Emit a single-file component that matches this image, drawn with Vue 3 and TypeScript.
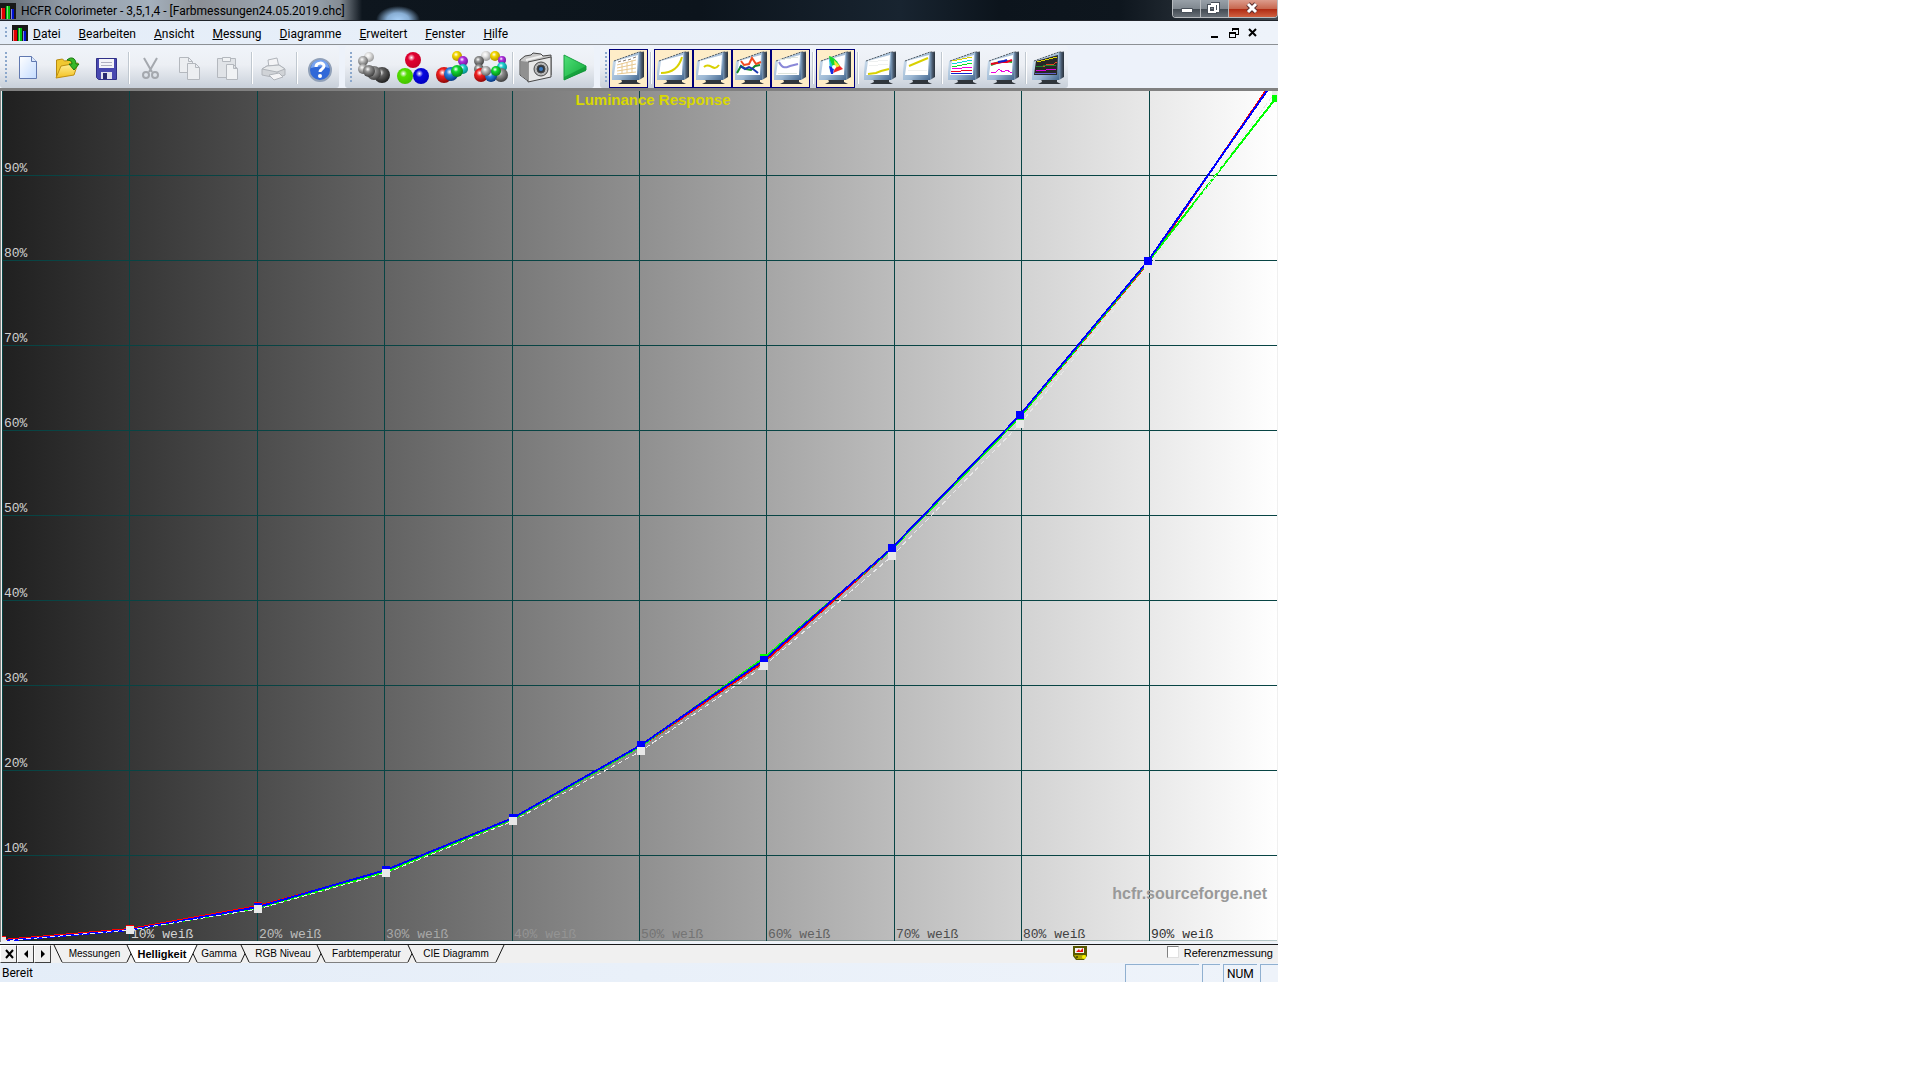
<script setup lang="ts">
import { ref } from 'vue'

type Ball = [number, number, number, string]
interface Trace { d: string; color: string; thin?: boolean }
interface Tool {
  id: string
  label: string
  sep?: boolean
  checked?: boolean
  balls?: Ball[]
  screen?: Trace[]
  dark?: boolean
}

const menus = ['Datei', 'Bearbeiten', 'Ansicht', 'Messung', 'Diagramme', 'Erweitert', 'Fenster', 'Hilfe']

const fileTools: Tool[] = [
  { id: 'new', label: 'Neu' },
  { id: 'open', label: 'Öffnen' },
  { id: 'save', label: 'Speichern' },
  { id: 'cut', label: 'Ausschneiden', sep: true },
  { id: 'copy', label: 'Kopieren' },
  { id: 'paste', label: 'Einfügen' },
  { id: 'print', label: 'Drucken', sep: true },
  { id: 'help', label: 'Hilfe', sep: true },
]

const measureTools: Tool[] = [
  { id: 'b1', label: 'Graustufen', balls: [[15, 8, 5, 'white'], [9, 12, 5, 'silver'], [9, 20, 5, 'silver'], [28, 26, 8, 'dark'], [20, 24, 7, 'grey'], [15, 22, 6, 'grey']] },
  { id: 'b2', label: 'Primärfarben', balls: [[20, 11, 8, 'crimson'], [12, 27, 8, 'lime'], [28, 27, 8, 'blue']] },
  { id: 'b3', label: 'Primär- und Sekundärfarben', balls: [[25, 7, 5, 'yellow'], [31, 12, 5, 'purple'], [31, 20, 5, 'cyan'], [12, 26, 8, 'red'], [19, 25, 7, 'sky'], [25, 22, 6, 'green']] },
  { id: 'b4', label: 'Alle Farben', balls: [[15, 7, 5, 'white'], [24, 7, 5, 'yellow'], [8, 12, 5, 'grey'], [31, 11, 4, 'purple'], [8, 20, 5, 'grey'], [31, 18, 5, 'cyan'], [10, 26, 7, 'red'], [30, 26, 7, 'grey'], [20, 27, 6, 'sky'], [15, 22, 5, 'silver'], [25, 22, 5, 'green']] },
  { id: 'camera', label: 'Sensor', sep: true },
  { id: 'play', label: 'Start' },
]

const viewTools: Tool[] = [
  { id: 'm1', label: 'Messungen', checked: true, screen: [
    { d: 'M9 13l3-1M14 12l3-1M19 11l3-1M24 9l3-1', color: '#8a7f78' },
    { d: 'M8 16l19-5M8 19l19-4M8 22l19-3M8 25l19-2M13 14v10M18 13v11M23 11v12', color: '#e8c890' },
  ] },
  { id: 'm2', label: 'Helligkeit', sep: true, checked: true, screen: [{ d: 'M7 24C17 24 25 19 28 8', color: '#d8d000' }] },
  { id: 'm3', label: 'Gamma', checked: true, screen: [{ d: 'M11 18c3-3 6-1 8 0s4 2 7-2', color: '#d8d000' }] },
  { id: 'm4', label: 'RGB Niveau', checked: true, screen: [
    { d: 'M5 24l4-7 5 3 5 1 4-4 5-1', color: '#138a2c' },
    { d: 'M9 12l3 4 5-1 3-6 4 6 5-2', color: '#f04a20' },
    { d: 'M8 17l5 3 4-2 4 2 5 4', color: '#1838b0' },
  ] },
  { id: 'm5', label: 'Farbtemperatur', checked: true, screen: [
    { d: 'M7 11l20-3M7 24h19', color: '#dde4dd', thin: true },
    { d: 'M8 13c4 8 8 5 11 4l8-2', color: '#8a88d8' },
  ] },
  { id: 'cie', label: 'CIE Diagramm', sep: true, checked: true, screen: [] },
  { id: 'm7', label: 'Nahe Schwarz', sep: true, screen: [
    { d: 'M8 17l19-2M8 13l19-2', color: '#eef0f0', thin: true },
    { d: 'M7 25l8-1 5-2 8-2', color: '#d8d000' },
  ] },
  { id: 'm8', label: 'Nahe Weiß', screen: [
    { d: 'M8 21h19', color: '#eef0f0', thin: true },
    { d: 'M9 17l19-8', color: '#d8d000' },
  ] },
  { id: 'm9', label: 'Sättigung Luminanz', sep: true, screen: [
    { d: 'M7 12l20-4', color: '#d8d000', thin: true }, { d: 'M7 15l20-4', color: '#10d8d8', thin: true }, { d: 'M7 18l20-4', color: '#10e020', thin: true },
    { d: 'M7 20l20-2', color: '#f000e0', thin: true }, { d: 'M6 23l21-2', color: '#f00020', thin: true }, { d: 'M6 25l21-1', color: '#1020d0', thin: true },
  ] },
  { id: 'm10', label: 'Sättigung Verschiebung', screen: [
    { d: 'M7 16l5-2 5-1 5-1 6 1', color: '#10b020' }, { d: 'M7 15l6-1 5-1 5 0 5-2', color: '#f00020' }, { d: 'M14 13l6-1 3-1', color: '#1020d0' },
    { d: 'M7 24l5-1 3-3 4 3 4-2 3 2 2 0', color: '#f000e0', thin: true },
  ] },
  { id: 'm11', label: 'Kombiniert', sep: true, dark: true, screen: [
    { d: 'M8 13l20-5', color: '#e0d800', thin: true }, { d: 'M7 18l5-1 3 1 4-3 4 1 5-3', color: '#e04820', thin: true },
    { d: 'M7 17l5 1 4-2 5 1 6-1', color: '#208830', thin: true }, { d: 'M7 22l20-2', color: '#e000e0', thin: true }, { d: 'M6 25l21-1', color: '#6060d0', thin: true },
  ] },
]

const bands: { name: string; tools: Tool[] }[] = [
  { name: 'Datei', tools: fileTools },
  { name: 'Messung', tools: measureTools },
  { name: 'Ansicht', tools: viewTools },
]

const ballColors: Record<string, [string, string]> = {
  white: ['#e6e6e6', '#9a9a9a'], silver: ['#bcbcbc', '#606060'], grey: ['#909090', '#404040'], dark: ['#606060', '#202020'],
  crimson: ['#e00030', '#c80028'], lime: ['#52dc00', '#44c400'], blue: ['#0808e0', '#0000c0'],
  yellow: ['#f4d800', '#b09000'], purple: ['#b030e0', '#701898'], cyan: ['#20d0d0', '#088888'],
  green: ['#10d830', '#088018'], red: ['#f02020', '#900808'], sky: ['#2a80e0', '#083880'],
}

const left = 2
const bottom = 852
const stepX = 127.4
const stepY = 85
const levels = [1, 2, 3, 4, 5, 6, 7, 8, 9]
const gridX = (n: number) => Math.round(left + n * stepX)
const gridY = (n: number) => bottom - n * stepY
const labelColors = ['#d4d4d4', '#bdbdbd', '#a8a8a8', '#949494', '#747474', '#606060', '#4c4c4c', '#404040', '#303030']

const markerX = [2, 130, 258, 386, 513, 641, 764, 892, 1020, 1148, 1276]
interface Series { name: string; color: string; values: number[]; reference?: boolean }
const series: Series[] = [
  { name: 'red', color: '#f00', values: [852, 841, 818, 783, 731, 658, 574, 461, 329, 175, -12] },
  { name: 'green', color: '#0f0', values: [853, 842, 820, 784, 731, 658, 570, 461, 329, 174, 10] },
  { name: 'blue', color: '#00f', values: [853, 842, 819, 782, 730, 657, 572, 460, 327, 173, -10] },
  { name: 'white', color: '#e8e8e8', reference: true, values: [853, 842, 821, 785, 733, 663, 578, 468, 336, 181, 3] },
]
const line = (v: number[]) => v.map((y, i) => `${markerX[i]},${y}`).join(' ')

const tabs = [
  { name: 'Messungen', width: 81 },
  { name: 'Helligkeit', width: 70 },
  { name: 'Gamma', width: 60 },
  { name: 'RGB Niveau', width: 84 },
  { name: 'Farbtemperatur', width: 99 },
  { name: 'CIE Diagramm', width: 96 },
]
const activeTab = ref('Helligkeit')
const useReference = ref(false)
</script>

<template>
  <div class="desktop">
    <main class="window">
      <svg class="defs" aria-hidden="true">
        <defs>
          <radialGradient v-for="(c, name) in ballColors" :id="'ball-' + name" :key="name" cx="0.4" cy="0.35" r="0.65">
            <stop offset="0" stop-color="#fff" />
            <stop offset="0.35" :stop-color="c[0]" />
            <stop offset="1" :stop-color="c[1]" />
          </radialGradient>
          <linearGradient id="bezel" x1="0" y1="0" x2="1" y2="1">
            <stop offset="0" stop-color="#dce9f4" />
            <stop offset="0.6" stop-color="#9cb8d4" />
            <stop offset="1" stop-color="#456890" />
          </linearGradient>
          <linearGradient id="side" x1="0" y1="0" x2="1" y2="0">
            <stop offset="0" stop-color="#7898b8" />
            <stop offset="0.5" stop-color="#48586c" />
            <stop offset="1" stop-color="#283038" />
          </linearGradient>
          <linearGradient id="paper" x1="0" y1="0" x2="1" y2="1">
            <stop offset="0" stop-color="#fff" />
            <stop offset="1" stop-color="#c4dcff" />
          </linearGradient>
          <linearGradient id="folder" x1="0" y1="0" x2="0" y2="1">
            <stop offset="0" stop-color="#fff4a0" />
            <stop offset="1" stop-color="#f4c020" />
          </linearGradient>
          <linearGradient id="play" x1="0" y1="0" x2="1" y2="1">
            <stop offset="0" stop-color="#50e078" />
            <stop offset="1" stop-color="#10a838" />
          </linearGradient>
          <linearGradient id="shade" x1="0" y1="0" x2="1" y2="0">
            <stop offset="0" stop-color="#202020" />
            <stop offset="1" stop-color="#fff" />
          </linearGradient>
        </defs>
      </svg>

      <header class="titlebar">
        <svg class="logo" viewBox="0 0 16 16"><path fill="#181818" d="M0 0h16v16H0z" /><path fill="#e00000" d="M1 5h4v11H1z" /><path fill="#00c010" d="M6 3h4v13H6z" /><path fill="#0010d0" d="M11 6h3v10h-3z" /><path fill="#fff" opacity=".5" d="M1 5h1v11H1zM7 3h1v13H7zM11 6h1v10h-1z" /></svg>
        <h1>HCFR Colorimeter - 3,5,1,4 - [Farbmessungen24.05.2019.chc]</h1>
        <div class="caption-buttons">
          <button type="button" aria-label="Minimieren"><svg viewBox="0 0 26 18"><path fill="#fff" stroke="#48505a" d="M8.500 8.500h11v4h-11z" /></svg></button>
          <button type="button" aria-label="Wiederherstellen"><svg viewBox="0 0 26 18"><path fill="none" stroke="#48505a" stroke-width="4" d="M10 4h7v7M8 6h6v6H8z" /><path fill="none" stroke="#fff" stroke-width="2" d="M10 4h7v7h-2M8 6h6v6H8z" /></svg></button>
          <button type="button" class="close" aria-label="Schließen"><svg viewBox="0 0 46 18"><path stroke="#5a3030" stroke-width="5" d="M19 4l8 8M27 4l-8 8" /><path stroke="#fff" stroke-width="3" d="M19 4l8 8M27 4l-8 8" /></svg></button>
        </div>
      </header>

      <nav class="menubar">
        <span class="grip" />
        <svg class="logo" viewBox="0 0 16 16"><path fill="#181818" d="M0 0h16v16H0z" /><path fill="#e00000" d="M1 5h4v11H1z" /><path fill="#00c010" d="M6 3h4v13H6z" /><path fill="#0010d0" d="M11 6h3v10h-3z" /><path fill="#fff" opacity=".5" d="M1 5h1v11H1zM7 3h1v13H7zM11 6h1v10h-1z" /></svg>
        <button v-for="m in menus" :key="m" type="button" class="menu"><u>{{ m[0] }}</u>{{ m.slice(1) }}</button>
        <div class="mdi">
          <button type="button" aria-label="Fenster minimieren"><svg viewBox="0 0 10 10"><path fill="#000" d="M1 8h7v2H1z" /></svg></button>
          <button type="button" aria-label="Fenster wiederherstellen"><svg viewBox="0 0 10 10" shape-rendering="crispEdges"><path fill="#000" d="M3 0h7v7H7V6h2V2H4v1H3zM0 4h7v6H0zM1 6v3h5V6z" fill-rule="evenodd" /></svg></button>
          <button type="button" aria-label="Fenster schließen"><svg viewBox="0 0 10 10"><path stroke="#000" stroke-width="2" d="M1 1l7 7M8 1l-7 7" /></svg></button>
        </div>
      </nav>

      <div class="toolbar">
        <div v-for="band in bands" :key="band.name" class="band" role="toolbar" :aria-label="band.name">
          <span class="grip tall" />
          <template v-for="t in band.tools" :key="t.id">
            <span v-if="t.sep" class="sep" />
            <button type="button" class="tool" :class="{ checked: t.checked }" :aria-label="t.label">
              <svg viewBox="0 0 39 39">
                <template v-if="t.balls">
                  <circle v-for="(b, i) in t.balls" :key="i" :cx="b[0]" :cy="b[1]" :r="b[2]" :fill="`url(#ball-${b[3]})`" />
                </template>
                <template v-else-if="t.screen">
                  <path fill="#30363c" d="M12 30h16v3l4 2H9l4-2z" />
                  <path fill="url(#side)" d="M30 3h5v25l-5 3z" />
                  <path fill="url(#bezel)" d="M4 12l26-9v28H3V23z" />
                  <path fill="none" stroke="#505860" stroke-dasharray="2 1" d="M5 12l25-9h5" />
                  <path :fill="t.dark ? '#282828' : '#fff'" d="M7 12l22-6-1 20H5z" />
                  <template v-if="t.id === 'cie'">
                    <path fill="#18d830" d="M13 7c5 1 9 6 11 10l-9 3z" />
                    <path fill="#20c8d8" d="M13 9l5 11-4 3z" />
                    <path fill="#f02828" d="M27 20l-10 4 3-7 3-1z" />
                    <path fill="#1828e0" d="M13 17l5 2-1 6h-2z" />
                    <path fill="#f8e830" d="M18 11l6 6-5 2z" />
                    <circle cx="18" cy="18" r="2" fill="#fff" />
                  </template>
                  <path v-for="(s, i) in t.screen" :key="i" :d="s.d" fill="none" :stroke="s.color" :stroke-width="s.thin || t.id === 'm1' ? 1 : 2" :shape-rendering="s.thin ? 'crispEdges' : undefined" />
                </template>
                <g v-else-if="t.id === 'new'">
                  <path fill="url(#paper)" stroke="#6078b0" d="M10.500 7.500h12l5 5v17h-17z" /><path fill="#dce8fc" stroke="#6078b0" d="M22.500 7.500v5h5" />
                </g>
                <g v-else-if="t.id === 'open'">
                  <path fill="#f0c830" stroke="#b88a10" d="M8.500 28V11l6-1 2 2 8-1v6" /><path fill="url(#folder)" stroke="#c09010" d="M8 29l5-12 17-3-4 12z" /><path fill="#38b828" stroke="#187810" d="M19 11c4-4 9-2 9 4h3l-5 6-5-6h3c0-3-2-4-5-4z" />
                </g>
                <g v-else-if="t.id === 'save'">
                  <path fill="#4848b0" stroke="#303088" d="M9.500 9.500h20v21h-18l-2-2z" /><path fill="#f4f4f8" d="M12 10h15v9H12z" /><path stroke="#b0b0c0" d="M14 13.500h11M14 16.500h11" /><path fill="#e0e0ec" d="M14 23h11v7H14z" /><path fill="#282870" d="M16 24h4v6h-4z" />
                </g>
                <g v-else-if="t.id === 'cut'" fill="none" stroke="#a4a8ae">
                  <path stroke-width="2" d="M12 9l8 14M25 9l-8 14" /><circle cx="14" cy="26" r="3" stroke-width="2" /><circle cx="23" cy="26" r="3" stroke-width="2" />
                </g>
                <g v-else-if="t.id === 'copy'" fill="#eceef1" stroke="#b4b8be">
                  <path d="M8.500 8.500h9l4 4v11h-13zM17.500 8.500v4h4" /><path d="M16.500 14.500h8l4 4v12h-12zM24.500 14.500v4h4" />
                </g>
                <g v-else-if="t.id === 'paste'" fill="#e0e3e7" stroke="#b4b8be">
                  <path d="M7.500 9.500h18v19h-18z" /><path fill="#f0f2f4" d="M12.500 8.500h8v4h-8zM16.500 15.500h7l4 4v11h-11zM23.500 15.500v4h4" />
                </g>
                <g v-else-if="t.id === 'print'" fill="#e4e6e9" stroke="#b0b4ba">
                  <path fill="#f4f4f6" d="M14 19l-1-8 9-2 2 9" /><path fill="#d0d3d7" d="M7 20l5-3 12-1 6 4v6l-8 3-15-3z" /><path fill="#e8eaec" d="M7 20l5-3 12-1 6 4-8 3z" /><path d="M22 23v6" /><path fill="#f4f4f6" d="M14 26l10-2 4 4-9 3z" />
                </g>
                <g v-else-if="t.id === 'help'">
                  <circle cx="20" cy="21" r="11" fill="#3068d8" stroke="#90a0b8" stroke-width="2" /><path fill="#78a4f0" d="M11 19c1-11 17-11 18 0-6-2-12-2-18 0z" /><path fill="none" stroke="#fff" stroke-width="3" d="M16 18c0-5 8-5 8-1 0 3-4 3-4 6" /><circle cx="20" cy="27" r="2" fill="#fff" />
                </g>
                <g v-else-if="t.id === 'camera'" stroke="#484848">
                  <path fill="#c8c8c8" d="M4 11l5-4 6-1 2-2 8 1 2 2 8-1v20l-23 6-8-6z" /><path fill="#e8e8e8" d="M12 13l23-5v20l-23 5z" /><path fill="#909090" stroke="none" d="M5 12l7 1v18l-7-4z" /><path stroke="#f0f0f0" stroke-width="2" d="M10 11l16-4" /><circle cx="25" cy="20" r="7" fill="#b8b8b8" /><circle cx="25" cy="20" r="4" fill="#303840" /><circle cx="25" cy="20" r="2" fill="#3878c0" stroke="none" />
                </g>
                <g v-else-if="t.id === 'play'">
                  <path fill="url(#play)" stroke="#18a040" d="M9 6l22 11v4L9 31z" /><path fill="#0c9030" opacity=".6" d="M31 17v5L9 31v-3z" />
                </g>
              </svg>
            </button>
          </template>
        </div>
      </div>

      <svg class="chart" viewBox="0 0 1278 854" role="img" aria-label="Luminance Response">
        <path fill="#f0f0f0" d="M0 0h1278v854H0z" />
        <path fill="#808080" d="M0 0h1278v3H0zM0 3h1v851H0z" />
        <path fill="url(#shade)" d="M2 3h1275v850H2z" />
        <g class="grid">
          <path d="M2 3h1v850h-1z" />
          <template v-for="n in levels" :key="n">
            <rect :x="gridX(n)" y="3" width="1" height="850" />
            <rect x="2" :y="gridY(n)" width="1275" height="1" />
          </template>
          <rect x="2" y="852" width="1275" height="1" opacity="0.300" />
        </g>
        <text class="caption" x="653" y="17" text-anchor="middle">Luminance Response</text>
        <g class="labels">
          <template v-for="n in levels" :key="n">
            <text x="4" :y="gridY(n) - 3" fill="#d0d0d0">{{ n * 10 }}%</text>
            <text :x="gridX(n) + 2" y="850" :fill="labelColors[n - 1]">{{ n * 10 }}% weiß</text>
          </template>
        </g>
        <text class="watermark" x="1267" y="811" text-anchor="end">hcfr.sourceforge.net</text>
        <svg x="2" y="3" width="1275" height="850" viewBox="2 3 1275 850">
          <g v-for="s in series" :key="s.name" shape-rendering="crispEdges">
            <polyline :points="line(s.values)" fill="none" :stroke="s.color" :stroke-width="s.reference ? 1 : 2" :stroke-dasharray="s.reference ? '5 3' : undefined" />
            <rect v-for="(y, i) in s.values" :key="i" :x="markerX[i] - 4" :y="y - 4" width="8" height="8" :fill="s.color" />
          </g>
        </svg>
      </svg>

      <div class="tabbar">
        <button type="button" class="nav" aria-label="Schließen"><svg viewBox="0 0 10 10"><path stroke="#000" stroke-width="2" d="M2 1l7 8M9 1L2 9" /></svg></button>
        <button type="button" class="nav" aria-label="Zurück"><svg viewBox="0 0 10 10"><path d="M7 1v8L3 5z" /></svg></button>
        <button type="button" class="nav" aria-label="Weiter"><svg viewBox="0 0 10 10"><path d="M3 1v8l4-4z" /></svg></button>
        <div class="tabs" role="tablist">
          <button v-for="t in tabs" :key="t.name" type="button" role="tab" class="tab" :class="{ active: t.name === activeTab }" :aria-selected="t.name === activeTab" :style="{ width: t.width + 'px' }" @click="activeTab = t.name">
            <svg :viewBox="`0 0 ${t.width} 18`" aria-hidden="true">
              <path class="face" :d="`M0 0L8 17H${t.width - 8}L${t.width} 0z`" />
              <path class="foot" :d="`M8 17.500H${t.width - 8}`" />
              <path class="edge" :d="`M0 0L8 17M${t.width - 8} 17L${t.width} 0`" />
            </svg>
            <span>{{ t.name }}</span>
          </button>
        </div>
        <svg class="sensor" viewBox="0 0 14 14"><path fill="#585800" d="M0 0h14v10l-3 4H3L0 10z" /><path fill="#b0a800" d="M1 9h12v1l-3 3H4z" /><path fill="#f4f4f4" d="M2 2h9v5H2z" /><path fill="#f01010" d="M3 6l3-3 1 2 3-3v4H3z" /><circle cx="11" cy="11" r="2" fill="#f8f000" /><circle cx="4" cy="11" r="1" fill="#404000" /></svg>
        <label class="reference"><input v-model="useReference" type="checkbox"><span>Referenzmessung</span></label>
      </div>

      <footer class="status">
        <span class="ready">Bereit</span>
        <span class="pane wide" />
        <span class="pane" />
        <span class="pane num">NUM</span>
        <span class="pane" />
      </footer>
    </main>
  </div>
</template>

<style>
body { margin: 0; background: #fff; }
</style>

<style scoped>
.desktop { display: grid; grid-template-columns: 213fr 107fr; }
.window { min-width: 0; overflow: hidden; font-family: Roboto, "Noto Sans", sans-serif; font-size: 12px; color: #000; background: #edf2fa; }
.defs { position: absolute; width: 0; height: 0; }
button { margin: 0; padding: 0; border: 0; background: none; font: inherit; color: inherit; }
svg { display: block; }
.logo { width: 16px; height: 16px; flex: none; }

.titlebar {
  display: flex; align-items: flex-start; height: 21px; box-sizing: border-box; border-bottom: 1px solid #20242a;
  background:
    radial-gradient(ellipse 22px 14px at 398px 20px, #a8d0f8 0, #88aed4 50%, transparent 100%),
    linear-gradient(90deg, #606870 0, #8e98a4 60px, #a4b0bc 150px, #8c9096 200px, #a0acb8 300px, #848c94 340px, transparent 362px),
    linear-gradient(90deg, #101820 0, #0c141c 700px, #182430 900px, #0c141c 1000px, #0e161e 1120px, #404850 100%);
}
.titlebar .logo { margin-top: 3px; }
h1 { flex: 1; margin: 0 0 0 5px; font-size: 12px; font-weight: 400; line-height: 22px; white-space: nowrap; }
.caption-buttons { display: flex; height: 17px; border: 1px solid #b8bcc0; border-top: 0; border-radius: 0 0 4px 4px; overflow: hidden; }
.caption-buttons button { width: 28px; height: 17px; background: linear-gradient(#98a0a8 0, #808890 50%, #444c54 55%, #687078 100%); border-right: 1px solid #b8bcc0; }
.caption-buttons svg { width: 26px; height: 18px; }
.caption-buttons .close { width: 48px; border-right: 0; background: linear-gradient(#dc9c8c 0, #c86850 50%, #b02c14 55%, #d06040 100%); }
.caption-buttons .close svg { width: 46px; }

.menubar { display: flex; align-items: center; gap: 18px; height: 23px; border-bottom: 1px solid #8c9094; background: linear-gradient(90deg, #e4edf8, #eef3fa); }
.grip { width: 2px; height: 12px; margin-left: 5px; background: repeating-linear-gradient(#8ca8cc 0 2px, transparent 2px 4px); }
.menubar .grip, .menubar .logo { margin-right: -13px; }
.menu { line-height: 20px; padding-top: 2px; }
.mdi { display: flex; gap: 9px; margin: 0 20px 0 auto; }
.mdi svg { width: 10px; height: 10px; }

.toolbar { display: flex; gap: 6px; height: 42px; padding-top: 1px; }
.band { display: flex; align-items: flex-end; height: 42px; background: linear-gradient(#f0f4fa 0, #eceff4 45%, #dce1e8 70%, #c8d0da 100%); border-radius: 3px; }
.grip.tall { height: 30px; margin: 0 2px 6px 5px; }
.tool { width: 39px; height: 39px; box-sizing: border-box; }
.tool svg { width: 39px; height: 39px; }
.checked { background: #feedc8; border: 1px solid #00007b; }
.checked svg { margin: -1px; }
.sep { width: 6px; height: 32px; margin-bottom: 4px; background: linear-gradient(90deg, transparent 2px, #c0c8d0 2px 3px, #fff 3px 4px, transparent 4px); }

.chart { width: 100%; height: auto; }
.grid { fill: #084444; }
.caption, .watermark { font: bold 13px "Liberation Sans", Arial, sans-serif; }
.caption { fill: #d8d800; font-size: 15px; }
.watermark { fill: #999; font-size: 16px; }
.labels { font: 13px "Liberation Mono", "Courier New", monospace; }

.tabbar { display: flex; height: 18px; margin-top: 2px; border-top: 1px solid #181818; background: #f0f0f0; font: 10px "Liberation Sans", Arial, sans-serif; }
.nav { display: grid; place-items: center; width: 17px; height: 18px; box-sizing: border-box; border: 1px solid; border-color: #fff #404040 #404040 #fff; background: #f0f0f0; }
.nav svg { width: 10px; height: 10px; }
.tabs { display: flex; margin-left: 3px; }
.tab { position: relative; height: 18px; margin-right: -8px; line-height: 18px; text-align: center; }
.tab svg { position: absolute; inset: 0; width: 100%; height: 18px; overflow: visible; }
.tab span { position: relative; }
.tab.active { z-index: 1; font-weight: bold; font-size: 11px; }
.face { fill: #f0f0f0; }
.active .face { fill: #fff; }
.edge { fill: none; stroke: #181818; }
.foot { stroke: #808080; }
.sensor { width: 14px; height: 14px; margin: 1px 80px 0 auto; }
.reference { display: flex; gap: 5px; margin-right: 5px; font-size: 11px; line-height: 17px; }
.reference input { appearance: none; width: 12px; height: 12px; margin: 1px 0 0; border: 1px solid; border-color: #808080 #e0e0e0 #e0e0e0 #808080; background: #fff; }

.status { display: flex; gap: 3px; height: 19px; line-height: 21px; background: linear-gradient(90deg, #e4edf8, #eef3fa); }
.ready { flex: 1; margin-left: 2px; }
.pane { width: 18px; margin-top: 1px; box-sizing: border-box; border-left: 1px solid #90b0d0; border-top: 1px solid #90b0d0; }
.wide { width: 74px; }
.num { width: 34px; padding-left: 3px; line-height: 19px; }
</style>
